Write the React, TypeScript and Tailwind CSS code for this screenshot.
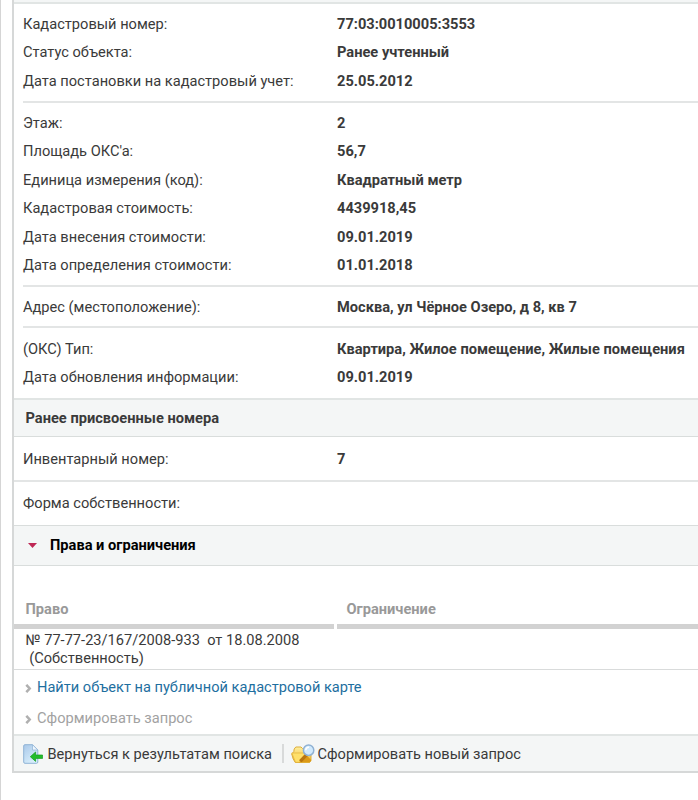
import React from "react";

const cadastre = [
  ["Кадастровый номер:", "77:03:0010005:3553"],
  ["Статус объекта:", "Ранее учтенный"],
  ["Дата постановки на кадастровый учет:", "25.05.2012"],
];

const details = [
  ["Этаж:", "2"],
  ["Площадь ОКС'а:", "56,7"],
  ["Единица измерения (код):", "Квадратный метр"],
  ["Кадастровая стоимость:", "4439918,45"],
  ["Дата внесения стоимости:", "09.01.2019"],
  ["Дата определения стоимости:", "01.01.2018"],
];

const address = [
  ["Адрес (местоположение):", "Москва, ул Чёрное Озеро, д 8, кв 7"],
];

const objectType = [
  ["(ОКС) Тип:", "Квартира, Жилое помещение, Жилые помещения"],
  ["Дата обновления информации:", "09.01.2019"],
];

const Rows = ({ items }: { items: string[][] }) => (
  <dl>
    {items.map(([label, value]) => (
      <div key={label} className="flex h-[28.5px] items-center">
        <dt className="w-[314px] shrink-0">{label}</dt>
        <dd className="font-bold">{value}</dd>
      </div>
    ))}
  </dl>
);

const Chevron = () => (
  <svg width="7" height="9" viewBox="0 0 7 9" className="mt-0.5 shrink-0">
    <path
      d="M1.3 0.8 4.7 4.5 1.3 8.2"
      fill="none"
      stroke="#b0b0b0"
      strokeWidth="2.5"
    />
  </svg>
);

const BackIcon = () => (
  <svg width="20" height="20" viewBox="0 0 20 20" className="shrink-0">
    <defs>
      <linearGradient id="page" x1="0" y1="0" x2="0.6" y2="1">
        <stop offset="0" stopColor="#a9c8e9" />
        <stop offset="1" stopColor="#d9effc" />
      </linearGradient>
    </defs>
    <path
      d="M2 0.7H9.5L14.8 6V18Q14.8 19.3 13.5 19.3H2Q0.7 19.3 0.7 18V2Q0.7 0.7 2 0.7Z"
      fill="url(#page)"
      stroke="#8fb3d6"
      strokeWidth="1"
    />
    <path d="M9.5 0.7V6H14.8Z" fill="#edf6fd" stroke="#8fb3d6" strokeWidth="0.7" />
    <path
      d="M7.3 12.7 12.6 8V11H19.6V14.4H12.6V17.4Z"
      fill="#22bd2b"
      stroke="#159c20"
      strokeWidth="0.7"
    />
  </svg>
);

const SearchIcon = () => (
  <svg width="24" height="20" viewBox="0 0 24 20" className="shrink-0">
    <defs>
      <linearGradient id="folder" x1="0" y1="0" x2="0" y2="1">
        <stop offset="0" stopColor="#fff0a0" />
        <stop offset="1" stopColor="#f2b526" />
      </linearGradient>
    </defs>
    <path
      d="M3.2 5 4.8 3H10L11.5 4.5H18.5L20 7V16.5L18.5 18.5H4.3L2.2 15 0.7 10 2.8 7.5Z"
      fill="url(#folder)"
      stroke="#dcae3c"
      strokeWidth="1"
    />
    <path
      d="M0.8 9H12.5L16 12 18.3 18.3H4.5Z"
      fill="#ffe06a"
      stroke="#e3b23a"
      strokeWidth="0.7"
    />
    <path d="M8 18.2 15.3 11 20 15.8V17L18.5 18.3H8Z" fill="#dc9a17" />
    <path d="m8 16.3 6-6.3 2.4 2.2-5.8 6Z" fill="#b87510" />
    <circle cx="17.6" cy="6.2" r="5.2" fill="#d1eafd" stroke="#8fb1d3" strokeWidth="1.5" />
    <path d="M14.7 6.2Q15 3.2 18 3.2" fill="none" stroke="#fff" strokeWidth="1.5" />
  </svg>
);

const App = () => {
  return (
    <div className="h-[800px] w-full overflow-hidden border-l border-[#d5d5d5] bg-white pl-[11px] font-[Roboto,sans-serif] text-[14.63px] leading-[18px] text-[#3a3a3a]">
      <div className="h-[773px] border-b-2 border-l-2 border-[#d6d8d8] bg-white">
        <div className="h-1 border-b-2 border-[#e1e5e4] bg-[#f4f6f6]" />

        <div className="pl-[9px]">
          <div className="h-[99px] border-b-2 border-[#e3e5e5] pt-[5.5px]">
            <Rows items={cadastre} />
          </div>
          <div className="h-[184px] border-b-2 border-[#e3e5e5] pt-[5.5px]">
            <Rows items={details} />
          </div>
          <div className="h-[41px] border-b-2 border-[#e3e5e5] pt-[5.5px]">
            <Rows items={address} />
          </div>
          <div className="h-[70px] pt-[6.3px]">
            <Rows items={objectType} />
          </div>
        </div>

        <div className="flex h-[39px] items-center border-t-2 border-b border-t-[#e1e5e4] border-b-[#d9dddc] bg-[#f4f6f6] pl-[11.5px] font-bold">
          Ранее присвоенные номера
        </div>
        <div className="flex h-[45px] items-center border-b-2 border-[#e3e5e5] pl-[9px]">
          <span className="w-[314px]">Инвентарный номер:</span>
          <b>7</b>
        </div>
        <div className="flex h-[43px] items-center pb-px pl-[9px]">
          Форма собственности:
        </div>

        <div className="flex h-[41px] items-center border-y border-t-[#d9dddc] border-b-[#d9dddc] bg-[#f4f6f6] pb-px pl-3.5 font-bold text-black">
          <svg width="9" height="5" viewBox="0 0 9 5" className="mr-[13px]">
            <path d="M0 0H9L4.5 5Z" fill="#bf2855" />
          </svg>
          Права и ограничения
        </div>

        <div className="grid h-[63px] grid-cols-[320px_1fr] gap-[3px] font-bold text-[#999999]">
          <div className="border-b-[5px] border-[#d2d2d2] pt-[34px] pl-[11.5px]">
            Право
          </div>
          <div className="border-b-[5px] border-[#d2d2d2] pt-[34px] pl-[9.5px]">
            Ограничение
          </div>
        </div>
        <div className="h-[41px] border-b border-[#d9dbdb] pt-0.5 pl-[11.5px] whitespace-pre">
          <p>№ 77-77-23/167/2008-933{"  "}от 18.08.2008</p>
          <p>{" "}(Собственность)</p>
        </div>

        <div className="h-16 pt-[3px] pl-[11px]">
          <a className="flex h-[28px] items-center gap-[5px] text-[14.6px] text-[#1e6f9f]">
            <Chevron />
            Найти объект на публичной кадастровой карте
          </a>
          <span className="mt-[3px] flex h-[28px] items-center gap-[5px] text-[#a2a2a2]">
            <Chevron />
            Сформировать запрос
          </span>
        </div>

        <div className="flex h-[37px] items-center border-t-2 border-[#e1e5e4] bg-[#f4f6f6] pl-[9px]">
          <BackIcon />
          <span className="ml-[4.5px] w-[234.5px] whitespace-nowrap text-[14.6px]">
            Вернуться к результатам поиска
          </span>
          <span className="mr-[7px] h-[19px] w-0.5 bg-[#d8dada]" />
          <SearchIcon />
          <span className="ml-[2.5px] text-[14.6px]">
            Сформировать новый запрос
          </span>
        </div>
      </div>
    </div>
  );
};

export default App;
